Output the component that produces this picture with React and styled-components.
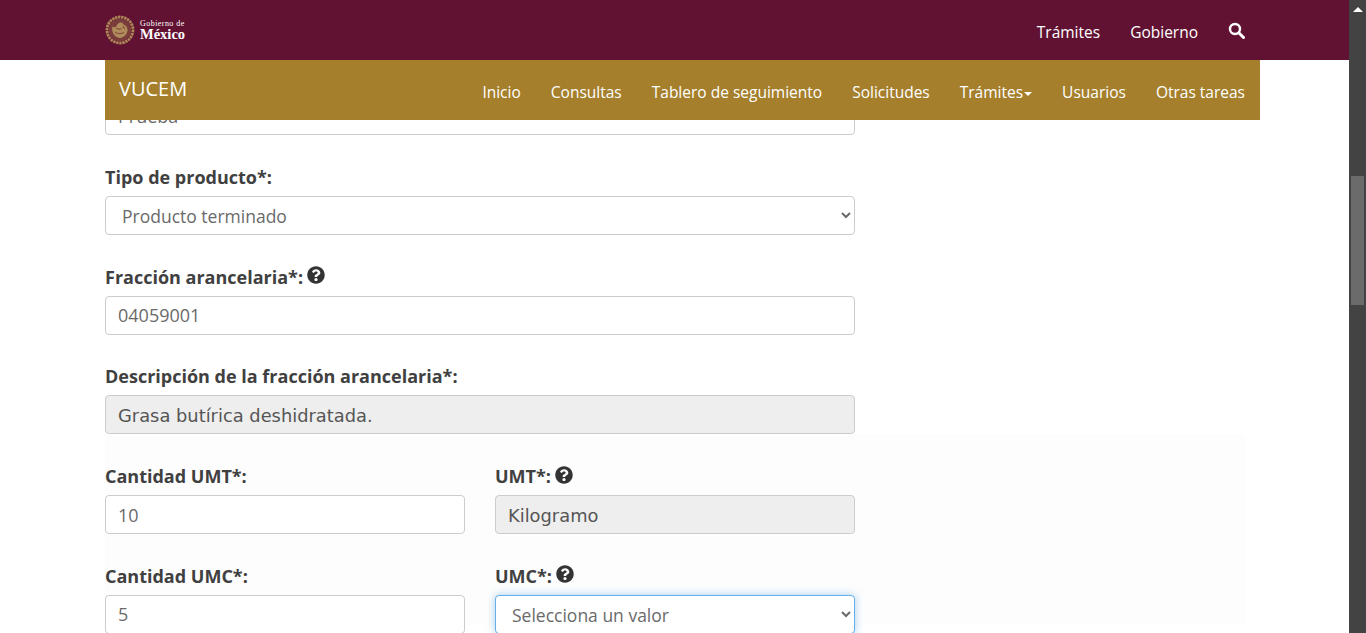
import React from 'react';
import styled, { createGlobalStyle } from 'styled-components';
import { FaQuestionCircle } from 'react-icons/fa';

const GlobalStyle = createGlobalStyle`
  html, body {
    margin: 0;
    height: 100%;
    overflow: hidden;
    background: #fff;
  }
  * {
    box-sizing: border-box;
  }
`;

const Page = styled.div`
  display: flex;
  height: 633px;
  overflow: hidden;
  font-family: 'Open Sans', sans-serif;
  color: #404041;
`;

const Viewport = styled.div`
  position: relative;
  flex: 1;
  overflow: hidden;
`;

/* fixed header, lies over the form */
const Header = styled.header`
  position: absolute;
  top: 0;
  left: 0;
  right: 0;
  z-index: 2;
`;

const TopBar = styled.div`
  height: 60px;
  background: #611232;
  padding: 0 104px 0 105px;
  display: flex;
  align-items: center;
  justify-content: space-between;
`;

const Logo = styled.a`
  display: flex;
  align-items: center;
  gap: 5px;
  color: #fff;
`;

const LogoText = styled.div`
  display: flex;
  flex-direction: column;
  font-family: 'Liberation Serif', serif;
  line-height: 1;
  margin-top: 2px;
`;

const LogoSmall = styled.span`
  font-size: 8px;
  letter-spacing: 0.45px;
`;

const LogoBig = styled.span`
  font-size: 14.5px;
  font-weight: 700;
  margin-top: -1px;
`;

const TopLinks = styled.nav`
  display: flex;
  align-items: center;
  gap: 30px;
  margin-top: 4px;
  color: #fff;
  font-size: 15.5px;
`;

const SearchIcon = styled.svg`
  width: 17px;
  height: 17px;
  margin-top: -3px;
`;

const SubBar = styled.div`
  height: 60px;
  margin: 0 89px 0 105px;
  background: #a57f2c;
  padding: 0 15px 0 14px;
  display: flex;
  align-items: center;
  justify-content: space-between;
  color: #fff;
`;

const Brand = styled.span`
  font-size: 20px;
  margin-top: -4px;
`;

const SubLinks = styled.nav`
  display: flex;
  gap: 30px;
  font-size: 15.5px;
  margin-top: 4px;
`;

const Caret = styled.span`
  display: inline-block;
  width: 0;
  height: 0;
  margin-left: 1px;
  vertical-align: middle;
  border-top: 4px solid #fff;
  border-left: 4px solid transparent;
  border-right: 4px solid transparent;
`;

const Form = styled.form`
  margin-left: 105px;
  padding-top: 96px;
`;

const Field = styled.div`
  width: 750px;
  margin-bottom: ${p => (p.$last ? '0' : '29.75px')};
`;

/* faint panel behind the quantity rows */
const QuantityPanel = styled.section`
  width: 1140px;
  height: 191px;
  padding-top: 29.75px;
  background: #fdfdfd;
`;

const Row = styled.div`
  display: grid;
  width: 750px;
  grid-template-columns: 360px 360px;
  column-gap: 30px;

  ${Field} {
    width: auto;
  }
`;

const Label = styled.label`
  display: flex;
  align-items: center;
  gap: 5px;
  height: 24px;
  margin-bottom: 7px;
  font-size: 18px;
  font-weight: 700;
`;

const HelpIcon = styled(FaQuestionCircle)`
  width: 18px;
  height: 18px;
  margin-top: -3px;
  margin-left: -1px;
  color: #333;
`;

const Input = styled.input`
  display: block;
  width: 100%;
  height: 39px;
  padding: ${p => (p.disabled ? '7px 12px 5px' : '6px 12px')};
  border: 1px solid #ccc;
  border-radius: 4px;
  background: ${p => (p.disabled ? '#eee' : '#fff')};
  color: ${p => (p.disabled ? '#555' : '#6a6a6a')};
  font-family: ${p => (p.disabled ? "'DejaVu Sans', sans-serif" : "'Open Sans', sans-serif")};
  font-size: ${p => (p.disabled ? '17.85px' : '18px')};
  opacity: 1;
`;

const Select = styled.select`
  display: block;
  width: 100%;
  height: 39px;
  padding: 6px 12px;
  border: 1px solid ${p => (p.$focus ? '#66afe9' : '#ccc')};
  border-radius: 4px;
  background: #fff;
  color: #6a6a6a;
  font-family: 'Open Sans', sans-serif;
  font-size: 17.5px;
  box-shadow: ${p => (p.$focus ? '0 0 8px rgba(102, 175, 233, 0.6)' : 'none')};
`;

const Scrollbar = styled.div`
  width: 17px;
  background: #434343;
`;

const ScrollArrow = styled.div`
  margin: 7px auto 0;
  width: 0;
  height: 0;
  border-bottom: 5px solid #fff;
  border-left: 5px solid transparent;
  border-right: 5px solid transparent;
`;

const ScrollThumb = styled.div`
  margin: 164px 2px 0;
  height: 129px;
  background: #6b6b6b;
`;

const Seal = () => (
  <svg width="30" height="30" viewBox="0 0 30 30">
    <circle cx="15" cy="15" r="13" fill="none" stroke="#ad8757" strokeWidth="2.8" strokeDasharray="2.4 0.7" />
    <circle cx="15" cy="15" r="11.2" fill="#7b3d3c" />
    <path d="M7.5 11.5c1.5 1 3 1 4-.5 1-2.5 3-4 5-3.5 1.5.4 1.5 2 3 2.5 1.5.8 3 2.5 3 5 0 4-3.5 7.5-7.5 8-3.5-.5-6.5-3-7.500-6.500-.5-2-.5-3.500 0-5z" fill="#b08c5a" />
    <path d="M11 13c2 1.500 4 1.500 5.500.5M10 17c2 1.500 5 2.500 9 .5M18 11l1.500 3" fill="none" stroke="#7b3d3c" strokeWidth="1" />
  </svg>
);

const App = () => (
  <Page>
    <GlobalStyle />
    <Viewport>
      <Header>
        <TopBar>
          <Logo>
            <Seal />
            <LogoText>
              <LogoSmall>Gobierno de</LogoSmall>
              <LogoBig>México</LogoBig>
            </LogoText>
          </Logo>
          <TopLinks>
            <span>Trámites</span>
            <span>Gobierno</span>
            <SearchIcon viewBox="0 0 17 17">
              <circle cx="7" cy="7" r="5" fill="none" stroke="#fff" strokeWidth="2.4" />
              <path d="M10.8 10.8L15.5 15.5" stroke="#fff" strokeWidth="3" strokeLinecap="round" />
            </SearchIcon>
          </TopLinks>
        </TopBar>
        <SubBar>
          <Brand>VUCEM</Brand>
          <SubLinks>
            <span>Inicio</span>
            <span>Consultas</span>
            <span>Tablero de seguimiento</span>
            <span>Solicitudes</span>
            <span>Trámites<Caret /></span>
            <span>Usuarios</span>
            <span>Otras tareas</span>
          </SubLinks>
        </SubBar>
      </Header>

      <Form>
        <Field>
          <Input defaultValue="Prueba" readOnly />
        </Field>
        <Field>
          <Label>Tipo de producto*:</Label>
          <Select defaultValue="terminado">
            <option value="terminado">Producto terminado</option>
          </Select>
        </Field>
        <Field>
          <Label>Fracción arancelaria*: <HelpIcon /></Label>
          <Input defaultValue="04059001" readOnly />
        </Field>
        <Field $last>
          <Label>Descripción de la fracción arancelaria*:</Label>
          <Input defaultValue="Grasa butírica deshidratada." disabled />
        </Field>
        <QuantityPanel>
          <Row>
            <Field>
              <Label>Cantidad UMT*:</Label>
              <Input defaultValue="10" readOnly />
            </Field>
            <Field>
              <Label>UMT*: <HelpIcon /></Label>
              <Input defaultValue="Kilogramo" disabled />
            </Field>
            <Field>
              <Label>Cantidad UMC*:</Label>
              <Input defaultValue="5" readOnly />
            </Field>
            <Field>
              <Label>UMC*: <HelpIcon /></Label>
              <Select $focus defaultValue="">
                <option value="">Selecciona un valor</option>
              </Select>
            </Field>
          </Row>
        </QuantityPanel>
      </Form>
    </Viewport>
    <Scrollbar>
      <ScrollArrow />
      <ScrollThumb />
    </Scrollbar>
  </Page>
);

export default App;
